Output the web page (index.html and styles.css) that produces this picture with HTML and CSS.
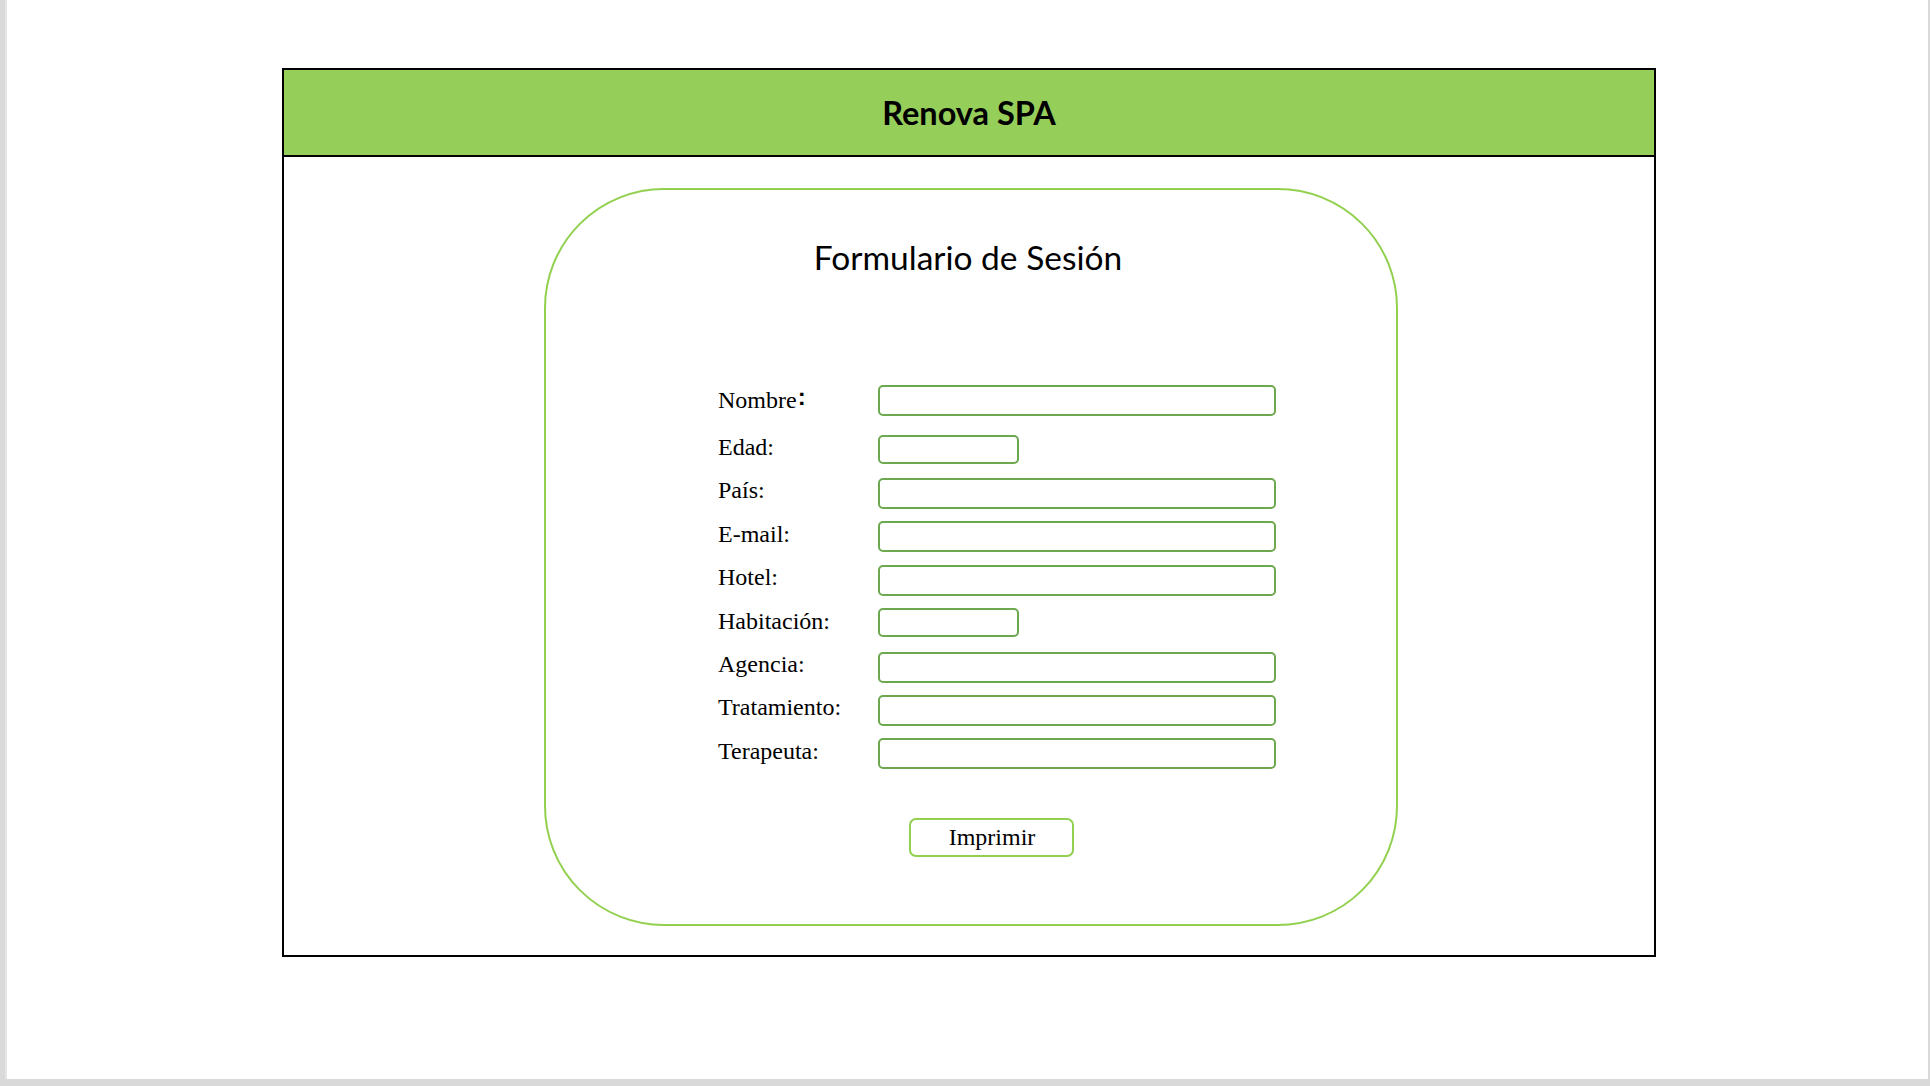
FILE: index.html
```html
<!DOCTYPE html>
<html lang="es">
<head>
<meta charset="utf-8">
<title>Renova SPA</title>
<link rel="stylesheet" href="styles.css">
</head>
<body>
<div class="page">
  <div class="frame">
    <header class="header">Renova SPA</header>
    <main class="content">
      <section class="card">
        <h1 class="title">Formulario de Sesión</h1>
        <form class="form">
          <div class="row row-first"><label class="label">Nombre<span class="colon">:</span></label><input class="field" type="text"></div>
          <div class="row"><label class="label">Edad:</label><input class="field field-short" type="text"></div>
          <div class="row"><label class="label">País:</label><input class="field" type="text"></div>
          <div class="row"><label class="label">E-mail:</label><input class="field" type="text"></div>
          <div class="row"><label class="label">Hotel:</label><input class="field" type="text"></div>
          <div class="row"><label class="label">Habitación:</label><input class="field field-short" type="text"></div>
          <div class="row"><label class="label">Agencia:</label><input class="field" type="text"></div>
          <div class="row"><label class="label">Tratamiento:</label><input class="field" type="text"></div>
          <div class="row"><label class="label">Terapeuta:</label><input class="field" type="text"></div>
          <button class="print-btn" type="button">Imprimir</button>
        </form>
      </section>
    </main>
  </div>
</div>
</body>
</html>
```
FILE: styles.css
```css
html, body {
  margin: 0;
  padding: 0;
}
body {
  background: #d9d9d9;
  width: 1930px;
  height: 1086px;
  overflow: hidden;
  font-family: "Liberation Serif", "Times New Roman", serif;
}
.page {
  margin-left: 7px;
  width: 1921px;
  height: 1079px;
  background: #ffffff;
  box-shadow: -2px 0 0 #e4e4e4;
  overflow: hidden;
  display: flex;
  flex-direction: column;
}
.frame {
  margin: 68px 0 0 275px;
  width: 1374px;
  height: 889px;
  box-sizing: border-box;
  border: 2px solid #000;
  display: flex;
  flex-direction: column;
}
.header {
  height: 85px;
  background: #96ce5a;
  border-bottom: 2px solid #000;
  display: flex;
  align-items: center;
  justify-content: center;
  font-family: Lato, "Open Sans", sans-serif;
  font-weight: 700;
  font-size: 32.5px;
  color: #000;
}
.content {
  flex: 1;
  display: flex;
  flex-direction: column;
}
.card {
  margin: 31px 0 0 260px;
  width: 854px;
  height: 738px;
  box-sizing: border-box;
  border: 2px solid #92d050;
  border-radius: 120px;
  display: flex;
  flex-direction: column;
}
.title {
  margin: 48px 0 0 0;
  padding-right: 6px;
  font-family: Lato, "Open Sans", sans-serif;
  font-weight: 400;
  font-size: 33.5px;
  line-height: 38px;
  text-align: center;
  color: #000;
}
.form {
  margin: 109px 0 0 172px;
  display: flex;
  flex-direction: column;
  gap: 13.4px;
}
.row {
  height: 30px;
  display: flex;
  align-items: flex-start;
}
.row-first {
  margin-bottom: 6.2px;
}
.label {
  width: 160px;
  height: 26px;
  flex: none;
  display: flex;
  align-items: center;
  font-size: 24px;
  color: #000;
  white-space: nowrap;
}
.row-first .label {
  height: 30px;
}
.colon {
  font-family: "Liberation Sans", Arial, sans-serif;
  font-weight: 700;
  font-size: 24px;
  margin-left: 1px;
  position: relative;
  top: -3px;
}
.field {
  width: 398px;
  height: 31px;
  flex: none;
  box-sizing: border-box;
  margin: 0;
  padding: 0 6px;
  border: 2px solid #6ea84e;
  border-radius: 5px;
  background: #fff;
  outline: none;
  font-family: "Liberation Serif", serif;
  font-size: 18px;
}
.field-short {
  width: 141px;
  height: 29px;
}
.print-btn {
  margin: 36px 0 0 191px;
  width: 165px;
  height: 39px;
  box-sizing: border-box;
  border: 2px solid #92d050;
  border-radius: 7px;
  background: #fff;
  padding: 0 0 0 1px;
  font-family: "Liberation Serif", "Times New Roman", serif;
  font-size: 24px;
  color: #000;
  cursor: pointer;
  align-self: flex-start;
}
```
